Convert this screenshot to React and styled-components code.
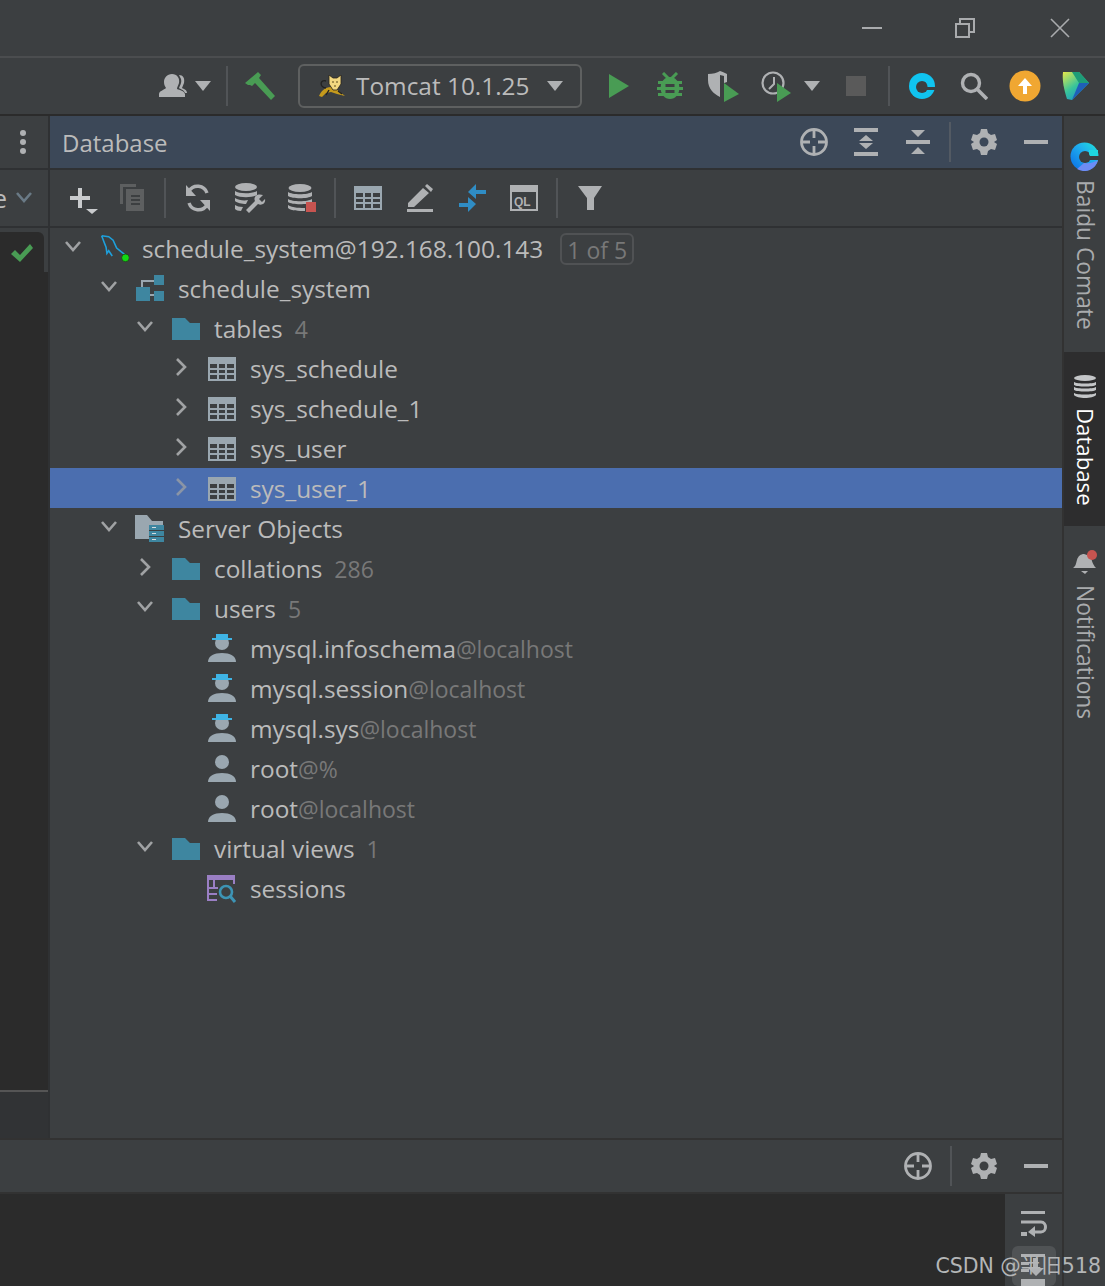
import React from 'react';
import styled, { createGlobalStyle } from 'styled-components';

const GREY = '#afb1b3';
const TABLE = '#9aa7b0';
const FOLDER = '#3e86a0';
const GREEN = '#499c54';

const GlobalStyle = createGlobalStyle`
  html, body {
    margin: 0;
    padding: 0;
    background: #3c3f41;
  }
  * {
    box-sizing: border-box;
  }
`;

const Page = styled.div`
  position: relative;
  display: flex;
  flex-direction: column;
  width: 1105px;
  height: 1286px;
  overflow: hidden;
  background: #3c3f41;
  color: #bbbbbb;
  font-family: 'Open Sans', 'Noto Sans', sans-serif;
`;

const TitleBar = styled.div`
  display: flex;
  flex: none;
  justify-content: flex-end;
  align-items: center;
  height: 58px;
  border-bottom: 2px solid #4b4d4f;
`;

const WinButton = styled.div`
  display: flex;
  justify-content: center;
  align-items: center;
  width: ${(p) => p.$w}px;
  height: 56px;
`;

const MainBar = styled.div`
  display: flex;
  flex: none;
  align-items: center;
  height: 58px;
  padding-left: 158px;
  border-bottom: 2px solid #2b2b2b;
`;

const IconSlot = styled.div`
  display: flex;
  flex: none;
  justify-content: center;
  align-items: center;
  width: ${(p) => p.$w || 52}px;
  margin-left: ${(p) => p.$ml || 0}px;
`;

const VSep = styled.div`
  flex: none;
  width: 2px;
  height: ${(p) => p.$h || 40}px;
  margin: 0 ${(p) => p.$mr || 0}px 0 ${(p) => p.$ml || 0}px;
  background: ${(p) => p.$color || '#515457'};
`;

const RunSelect = styled.div`
  display: flex;
  flex: none;
  align-items: center;
  width: 284px;
  height: 44px;
  margin-left: 22px;
  padding-left: 18px;
  border: 2px solid #5e6060;
  border-radius: 6px;
  font-size: 24.4px;
`;

const RunLabel = styled.span`
  margin-left: 10px;
  line-height: 40px;
  white-space: nowrap;
`;

const Body = styled.div`
  display: flex;
  flex: 1;
  min-height: 0;
`;

const Workspace = styled.div`
  display: flex;
  flex: 1;
  flex-direction: column;
  min-width: 0;
`;

const TopArea = styled.div`
  display: flex;
  flex: none;
  height: 1024px;
  border-bottom: 2px solid #323232;
`;

const LeftColumn = styled.div`
  display: flex;
  flex: none;
  flex-direction: column;
  width: 50px;
  border-right: 2px solid #2f3133;
`;

const DotsCell = styled.div`
  display: flex;
  flex: none;
  justify-content: flex-end;
  align-items: center;
  height: 54px;
  padding-right: 22px;
  border-bottom: 2px solid #2f3133;
`;

const ComboCell = styled.div`
  display: flex;
  flex: none;
  align-items: center;
  gap: 7px;
  height: 58px;
  margin-left: -7px;
  border-bottom: 2px solid #2f3133;
  font-size: 25px;
  color: #bbbbbb;
`;

const GutterGap = styled.div`
  flex: none;
  height: 4px;
`;

const CheckBox = styled.div`
  display: flex;
  flex: none;
  justify-content: center;
  align-items: center;
  width: 44px;
  height: 40px;
  padding-top: 2px;
  background: #2b2b2b;
  border-radius: 0 6px 0 0;
`;

const Gutter = styled.div`
  flex: none;
  height: 820px;
  background: #2b2b2b;
  border-bottom: 2px solid #555555;
`;

const GutterRest = styled.div`
  flex: 1;
  background: #313335;
`;

const DbPanel = styled.div`
  display: flex;
  flex: 1;
  flex-direction: column;
  min-width: 0;
`;

const PanelHeader = styled.div`
  display: flex;
  flex: none;
  align-items: center;
  height: 54px;
  padding-left: 12px;
  background: #3c4858;
  border-bottom: 2px solid #2f3133;
  background-clip: padding-box;
`;

const PanelTitle = styled.span`
  flex: 1;
  margin-top: 2px;
  font-size: 24px;
  line-height: 52px;
`;

const DbToolbar = styled.div`
  display: flex;
  flex: none;
  align-items: center;
  height: 58px;
  padding-left: 4px;
  border-bottom: 2px solid #2f3133;
`;

const Tree = styled.div`
  display: flex;
  flex: 1;
  flex-direction: column;
`;

const Row = styled.div`
  display: flex;
  flex: none;
  align-items: center;
  height: 40px;
  padding-top: 2px;
  padding-left: ${(p) => 12 + p.$level * 36}px;
  background: ${(p) => (p.$selected ? '#4b6eaf' : 'transparent')};
  font-size: 24.4px;
  white-space: nowrap;
`;

const Arrow = styled.div`
  display: flex;
  flex: none;
  justify-content: center;
  align-items: center;
  width: 22px;
  height: 38px;
  margin-top: -4px;
  opacity: ${(p) => (p.$selected ? 0.75 : 1)};
`;

const NodeIcon = styled.div`
  display: flex;
  flex: none;
  justify-content: center;
  align-items: center;
  width: 30px;
  height: 36px;
  margin: 0 13px 0 15px;
`;

const Label = styled.span`
  line-height: 38px;
  color: #bbbbbb;
`;

const Count = styled.span`
  margin-left: 12px;
  font-size: 23px;
  line-height: 38px;
  color: #787878;
`;

const Host = styled.span`
  font-size: 23px;
  line-height: 38px;
  color: #787878;
`;

const MatchBadge = styled.span`
  margin-left: 17px;
  padding: 0 5px;
  height: 32px;
  font-size: 23px;
  line-height: 30px;
  border: 2px solid #505254;
  border-radius: 6px;
  color: #787878;
`;

const BottomHeader = styled.div`
  display: flex;
  flex: none;
  justify-content: flex-end;
  align-items: center;
  height: 54px;
  border-bottom: 2px solid #323232;
`;

const Console = styled.div`
  display: flex;
  flex: 1;
  justify-content: flex-end;
  background: #2b2b2b;
`;

const ConsoleBar = styled.div`
  display: flex;
  flex-direction: column;
  align-items: center;
  width: 57px;
  padding-top: 17px;
  background: #3c3f41;
`;

const ScrollEnd = styled.div`
  display: flex;
  justify-content: center;
  width: 44px;
  height: 40px;
  margin-top: 9px;
  padding-top: 8px;
  background: #505355;
  border-radius: 6px;
`;

const RightStrip = styled.div`
  display: flex;
  flex: none;
  flex-direction: column;
  width: 43px;
  border-left: 2px solid #323232;
`;

const StripTab = styled.div`
  display: flex;
  flex: none;
  flex-direction: column;
  align-items: center;
  gap: ${(p) => p.$gap}px;
  height: ${(p) => p.$h}px;
  padding-top: ${(p) => p.$pt}px;
  background: ${(p) => (p.$active ? '#2d2d2e' : 'transparent')};
`;

const StripLabel = styled.span`
  writing-mode: vertical-rl;
  font-size: ${(p) => (p.$active ? 22.2 : 22.8)}px;
  line-height: 30px;
  white-space: nowrap;
  color: ${(p) => (p.$active ? '#ffffff' : '#a9abad')};
`;

const Watermark = styled.div`
  position: absolute;
  right: 4px;
  bottom: 6px;
  font-family: 'DejaVu Sans', 'Noto Sans CJK SC', sans-serif;
  font-size: 20.5px;
  line-height: 28px;
  color: #b4b6b7;
  white-space: nowrap;
`;

const Svg = ({ w, h, children, style }) => (
  <svg width={w} height={h} viewBox={`0 0 ${w} ${h}`} style={style} fill="none">
    {children}
  </svg>
);

const Caret = ({ color = GREY }) => (
  <Svg w={20} h={12}>
    <path d="M2 1h16l-8 10z" fill={color} />
  </Svg>
);

const Down = ({ color = '#a0a2a4' }) => (
  <Svg w={20} h={14}>
    <path d="M3 2l7 8 7-8" stroke={color} strokeWidth="2.6" />
  </Svg>
);

const Right = () => (
  <Svg w={14} h={20}>
    <path d="M3 2l8 8-8 8" stroke="#a0a2a4" strokeWidth="2.6" />
  </Svg>
);

const Folder = () => (
  <Svg w={28} h={22}>
    <path d="M0 0h13l5 5h10v17H0z" fill={FOLDER} />
  </Svg>
);

const TableIcon = () => (
  <Svg w={28} h={24}>
    <path d="M0 0h28v24H0z" fill={TABLE} />
    <path
      d="M2 7h7v4H2zM11 7h6v4h-6zM19 7h7v4h-7zM2 13h7v3H2zM11 13h6v3h-6zM19 13h7v3h-7zM2 18h7v4H2zM11 18h6v4h-6zM19 18h7v4h-7z"
      fill="#3c3f41"
    />
  </Svg>
);

const Person = ({ hat }) => (
  <Svg w={28} h={30}>
    <circle cx="14" cy={hat ? 9 : 8} r="7" fill={TABLE} />
    <path d="M0 28c0-6 6-9 14-9s14 3 14 9z" fill={TABLE} />
    {hat && (
      <>
        <path d="M8 0h12v5H8z" fill="#3fb4e5" />
        <path d="M4 4h20v2H4z" fill="#3fb4e5" />
      </>
    )}
  </Svg>
);

const Dolphin = () => (
  <Svg w={34} h={34}>
    <path
      d="M3 2l8 1 5 4 4 9 5 4 4 3M3 2l3 8 2 5 1 7 2-3 4 6"
      stroke="#1ea0dc"
      strokeWidth="1.8"
    />
    <circle cx="30" cy="27" r="4.4" fill="#12d912" stroke="#22421f" strokeWidth="1" />
  </Svg>
);

const Schema = () => (
  <Svg w={28} h={28}>
    <path d="M18 0h10v10H18zM0 12h14v14H0zM18 16h10v10H18z" fill={FOLDER} />
    <path d="M6 12V6h12M14 20h4" stroke="#9aa7b0" strokeWidth="2" />
  </Svg>
);

const ServerObjects = () => (
  <Svg w={30} h={28}>
    <path d="M0 0h12l5 6h11v4H14v14H0z" fill={TABLE} />
    <path d="M14 10h15v5H14zM14 16h15v5H14zM14 22h15v5H14z" fill={FOLDER} />
    <path d="M17 12h4v1h-4zM17 18h4v1h-4zM17 24h4v1h-4z" fill="#d5dde0" />
  </Svg>
);

const VirtualView = () => (
  <Svg w={30} h={28}>
    <path d="M0 0h28v5H0z" fill="#9a7fc4" />
    <path
      d="M0 5h2v21H0zM2 12h9v2H2zM2 18h8v2H2zM2 24h8v2H2zM6 5h2v9H6zM26 5h2v4h-2z"
      fill="#9a7fc4"
    />
    <circle cx="19" cy="17" r="6" stroke="#3d94b5" strokeWidth="2.6" />
    <path d="M23 21l5 6" stroke="#3d94b5" strokeWidth="3" />
  </Svg>
);

const Target = ({ color = GREY }) => (
  <Svg w={28} h={28}>
    <circle cx="14" cy="14" r="12.5" stroke={color} strokeWidth="2.8" />
    <path d="M14 2v8M14 18v8M2 14h8M18 14h8" stroke={color} strokeWidth="2.8" />
  </Svg>
);

const GEAR_PATH =
  'M10 1h6l1 4 3 2 4-1 2 6-3 2 3 2-2 6-4-1-3 2-1 4h-6l-1-4-3-2-4 1-2-6 3-2-3-2 2-6 4 1 3-2z';

const Gear = ({ hole = '#3c3f41' }) => (
  <Svg w={26} h={28}>
    <path d={GEAR_PATH} fill={GREY} />
    <circle cx="13" cy="14" r="4.5" fill={hole} />
  </Svg>
);

const Dash = () => (
  <Svg w={24} h={4}>
    <path d="M0 0h24v4H0z" fill={GREY} />
  </Svg>
);

const Users = () => (
  <Svg w={30} h={26}>
    <path
      d="M14 1c5 0 8 4 7 9-1 3-2 4-2 6 3 1 7 2 8 5v3H1v-3c0-3 5-4 7-6-1-2-2-3-2-6 0-4 3-8 8-8z"
      fill={GREY}
    />
    <path d="M21 2c4 0 6 3 5 8l-2 5c2 1 5 2 5 5h-2c-1-3-5-4-6-5 1-3 3-5 2-9z" fill={GREY} />
  </Svg>
);

const Hammer = () => (
  <Svg w={32} h={30}>
    <path d="M1 12L14 1l3 3-2 3 16 18-4 4L11 12l-3 3-2-1-2 0z" fill={GREEN} />
  </Svg>
);

const Tomcat = () => (
  <Svg w={28} h={22}>
    <path d="M1 21c2-5 6-9 12-9l4 2c3 1 6 4 10 7l-8-2-6-2-5 1-4 4z" fill="#c59a1c" />
    <path d="M11 0l4 3h4l4-3v9l-4 6h-4l-4-6z" fill="#f3d880" stroke="#28241a" strokeWidth="0.8" />
    <path d="M14 7h2M18 7h2M16 11h2" stroke="#5a4a1a" strokeWidth="1.2" />
    <path d="M8 13C1 12 2 4 8 6" stroke="#222" strokeWidth="1.4" />
    <path d="M11 15l-3 5M20 16l4 3" stroke="#222" strokeWidth="1.4" />
  </Svg>
);

const Play = () => (
  <Svg w={20} h={24}>
    <path d="M0 0l20 12L0 24z" fill={GREEN} />
  </Svg>
);

const Bug = () => (
  <Svg w={26} h={28}>
    <path d="M6 1l6 6M20 1l-6 6" stroke={GREEN} strokeWidth="3" />
    <ellipse cx="13" cy="16" rx="9.5" ry="11" fill={GREEN} />
    <path d="M1 9h24v3H1zM0 15h26v3H0zM1 21h24v3H1z" fill={GREEN} />
    <path d="M8.5 12h9v3h-9zM8.5 18h9v3h-9z" fill="#3c3f41" />
  </Svg>
);

const Coverage = () => (
  <Svg w={32} h={32}>
    <path d="M1 4c5 0 9-1 12-3 3 1 5 2 7 3v8l-3 1v-7l-4-1v22c-6-3-12-8-12-17z" fill={GREY} />
    <path d="M17 13l15 11-15 8z" fill={GREEN} />
  </Svg>
);

const Profiler = () => (
  <Svg w={32} h={32}>
    <circle cx="12" cy="13" r="10.5" stroke={GREY} strokeWidth="2.2" />
    <path d="M13 7v7l-5 5" stroke={GREY} strokeWidth="2" />
    <path d="M16 13l14 10-14 9z" fill={GREEN} />
  </Svg>
);

const ComateTop = () => (
  <Svg w={28} h={28}>
    <circle cx="14" cy="14" r="13" fill="#10c4f0" />
    <circle cx="14" cy="15" r="6" fill="#3c3f41" />
    <path d="M14 15h14v3H14z" fill="#3c3f41" />
    <path d="M18 9h8v6h-8z" fill="#10c4f0" />
    <circle cx="15" cy="14.5" r="4.5" fill="#3c3f41" />
    <path d="M15 15h5v2h-5z" fill="#3c3f41" />
  </Svg>
);

const ComateSide = () => (
  <Svg w={29} h={29}>
    <defs>
      <linearGradient id="comate" x1="0" y1="1" x2="1" y2="0">
        <stop offset="0" stopColor="#0a6ae6" />
        <stop offset="0.6" stopColor="#1fb0ee" />
        <stop offset="1" stopColor="#1fe6d8" />
      </linearGradient>
    </defs>
    <circle cx="14.5" cy="14.5" r="14" fill="url(#comate)" />
    <path d="M14 21a14 7 0 0 0 14-3 14 14 0 0 1-21 9z" fill="#6d8cf5" />
    <circle cx="15" cy="15" r="6" fill="#3c3f41" />
    <path d="M15 14h14v4H15z" fill="#3c3f41" />
    <path d="M19 8h9v6h-9z" fill="#1fd8e0" />
    <circle cx="15.5" cy="15" r="4.5" fill="#3c3f41" />
  </Svg>
);

const Search = () => (
  <Svg w={28} h={28}>
    <circle cx="11" cy="11" r="8.5" stroke={GREY} strokeWidth="3.4" />
    <path d="M17 17l10 10" stroke={GREY} strokeWidth="3.6" />
  </Svg>
);

const UpdateBadge = () => (
  <Svg w={32} h={32}>
    <circle cx="16" cy="16" r="15.5" fill="#f0a732" />
    <path d="M16 8l-7 8h5v8h4v-8h5z" fill="#ffffff" />
  </Svg>
);

const Prism = () => (
  <Svg w={28} h={32}>
    <defs>
      <linearGradient id="prism" x1="0" y1="0" x2="0.7" y2="1">
        <stop offset="0" stopColor="#e8e84a" />
        <stop offset="0.55" stopColor="#38c49a" />
        <stop offset="1" stopColor="#1a8fd0" />
      </linearGradient>
    </defs>
    <path d="M1 2l16 0 10 11L10 30l-5-1C2 20 0 10 1 2z" fill="url(#prism)" />
    <path d="M10 2h7l10 11H17z" fill="#1d9c78" />
    <path d="M27 13L10 30l7-17z" fill="#1f5fb8" />
  </Svg>
);

const Dots = () => (
  <Svg w={6} h={24}>
    <circle cx="3" cy="3" r="3" fill={GREY} />
    <circle cx="3" cy="12" r="3" fill={GREY} />
    <circle cx="3" cy="21" r="3" fill={GREY} />
  </Svg>
);

const Expand = () => (
  <Svg w={24} h={28}>
    <path d="M0 0h24v4H0zM0 24h24v4H0zM12 7l7 6H5zM5 15h14l-7 6z" fill={GREY} />
  </Svg>
);

const Collapse = () => (
  <Svg w={24} h={26}>
    <path d="M0 11h24v4H0zM5 1h14l-7 7zM12 18l7 7H5z" fill={GREY} />
  </Svg>
);

const Plus = () => (
  <Svg w={36} h={32}>
    <path d="M16 6h4v8h8v4h-8v8h-4v-8H8v-4h8z" fill="#c9cbcd" />
    <path d="M24 27h12l-6 5z" fill="#c9cbcd" />
  </Svg>
);

const Duplicate = () => (
  <Svg w={24} h={28}>
    <path d="M0 0h16v3H3v17H0z" fill="#5d5f60" />
    <path d="M6 5h18v22H6z" fill="#5d5f60" />
    <path d="M11 11h9v2h-9zM11 15h9v2h-9zM11 19h9v2h-9z" fill="#3c3f41" />
  </Svg>
);

const Refresh = () => (
  <Svg w={26} h={28}>
    <path d="M22 9a10 10 0 0 0-18-2" stroke={GREY} strokeWidth="3.4" />
    <path d="M4 19a10 10 0 0 0 18 2" stroke={GREY} strokeWidth="3.4" />
    <path d="M1 1v11h10zM25 27V16H15z" fill={GREY} />
  </Svg>
);

const DbWrench = () => (
  <Svg w={32} h={30}>
    <ellipse cx="12" cy="4" rx="11" ry="4" fill={GREY} />
    <path d="M1 8c4 3 17 3 22 0v4c-5 3-17 3-22 0zM1 15c3 2 9 3 13 2l-2 4c-4 0-9-1-11-3zM1 22c2 1 4 2 8 2l-2 4c-3 0-5-1-6-2z" fill={GREY} />
    <path d="M29 12l-4 4 3 3 3-3c1 4-3 7-7 5l-9 9-3-3 9-9c-2-4 2-8 8-6z" fill={GREY} />
  </Svg>
);

const DbStop = () => (
  <Svg w={28} h={28}>
    <ellipse cx="12" cy="4" rx="11.5" ry="4" fill={GREY} />
    <path d="M0 8c4 3 20 3 24 0v4c-4 3-20 3-24 0zM0 15c4 3 20 3 24 0v3c-4 3-20 3-24 0zM0 21c4 3 14 3 17 3v3c-6 0-14 0-17-3z" fill={GREY} />
    <path d="M18 18h10v10H18z" fill="#c75450" />
  </Svg>
);

const Edit = () => (
  <Svg w={28} h={28}>
    <path d="M2 19L17 4l6 5L8 23H2zM19 2l2-2 6 5-2 3z" fill={GREY} />
    <path d="M1 25h26v3H1z" fill={GREY} />
  </Svg>
);

const Compare = () => (
  <Svg w={28} h={28}>
    <path d="M18 0v6h10v4H18v5l-8-7zM10 13v6h-9v4h9v5l8-8z" fill="#2f8dc5" />
  </Svg>
);

const QlConsole = () => (
  <Svg w={28} h={26}>
    <path d="M0 0h28v26H0z" fill={GREY} />
    <path d="M2 7h24v17H2z" fill="#3c3f41" />
    <text x="4" y="21" fontSize="12" fontFamily="'Liberation Sans', sans-serif" fontWeight="700" fill={GREY}>
      QL
    </text>
  </Svg>
);

const Funnel = () => (
  <Svg w={24} h={24}>
    <path d="M0 0h24l-8 12v12H9V12z" fill={GREY} />
  </Svg>
);

const Check = () => (
  <Svg w={24} h={20}>
    <path d="M1 11l4-4 5 5L20 1l3 4-13 14z" fill={GREEN} />
  </Svg>
);

const DbStack = () => (
  <Svg w={24} h={24}>
    <ellipse cx="12" cy="3" rx="11" ry="3" fill="#c4c6c8" />
    <path d="M1 7c3 2 19 2 22 0v3c-3 2-19 2-22 0zM1 12c3 2 19 2 22 0v3c-3 2-19 2-22 0zM1 18c3 2 19 2 22 0v2c-3 4-19 4-22 0z" fill="#c4c6c8" />
  </Svg>
);

const Bell = () => (
  <Svg w={26} h={26}>
    <path d="M1 18c3-2 3-5 4-8 1-4 4-6 7-6l6 2c2 3 2 8 6 12z" fill={GREY} />
    <path d="M9 21h7l-3 3z" fill={GREY} />
    <circle cx="20" cy="5" r="5" fill="#c75450" />
  </Svg>
);

const SoftWrap = () => (
  <Svg w={26} h={26}>
    <path d="M0 0h24v3H0zM0 21h6v4H0z" fill={GREY} />
    <path d="M0 11h20c6 0 6 10 0 10h-8" stroke={GREY} strokeWidth="3" />
    <path d="M14 15v11l-7-5z" fill={GREY} />
  </Svg>
);

const ScrollDown = () => (
  <Svg w={26} h={32}>
    <path d="M0 0h24v3H0zM0 8h8v3H0zM0 15h8v3H0zM0 25h24v7H0z" fill={GREY} />
    <path d="M12 4h5v10h6l-8 8-8-8h5z" fill={GREY} />
  </Svg>
);

const treeRows = [
  { level: 0, open: true, icon: <Dolphin />, label: 'schedule_system@192.168.100.143', badge: '1 of 5' },
  { level: 1, open: true, icon: <Schema />, label: 'schedule_system' },
  { level: 2, open: true, icon: <Folder />, label: 'tables', count: '4' },
  { level: 3, open: false, icon: <TableIcon />, label: 'sys_schedule' },
  { level: 3, open: false, icon: <TableIcon />, label: 'sys_schedule_1' },
  { level: 3, open: false, icon: <TableIcon />, label: 'sys_user' },
  { level: 3, open: false, icon: <TableIcon />, label: 'sys_user_1', selected: true },
  { level: 1, open: true, icon: <ServerObjects />, label: 'Server Objects' },
  { level: 2, open: false, icon: <Folder />, label: 'collations', count: '286' },
  { level: 2, open: true, icon: <Folder />, label: 'users', count: '5' },
  { level: 3, icon: <Person hat />, label: 'mysql.infoschema', host: '@localhost' },
  { level: 3, icon: <Person hat />, label: 'mysql.session', host: '@localhost' },
  { level: 3, icon: <Person hat />, label: 'mysql.sys', host: '@localhost' },
  { level: 3, icon: <Person />, label: 'root', host: '@%' },
  { level: 3, icon: <Person />, label: 'root', host: '@localhost' },
  { level: 2, open: true, icon: <Folder />, label: 'virtual views', count: '1' },
  { level: 3, icon: <VirtualView />, label: 'sessions' },
];

const TreeRow = ({ row }) => (
  <Row $level={row.level} $selected={row.selected}>
    <Arrow $selected={row.selected}>
      {row.open === true && <Down />}
      {row.open === false && <Right />}
    </Arrow>
    <NodeIcon>{row.icon}</NodeIcon>
    <Label>{row.label}</Label>
    {row.host && <Host>{row.host}</Host>}
    {row.count && <Count>{row.count}</Count>}
    {row.badge && <MatchBadge>{row.badge}</MatchBadge>}
  </Row>
);

export default function App() {
  return (
    <Page>
      <GlobalStyle />
      <TitleBar>
        <WinButton $w={86}>
          <Svg w={20} h={2}>
            <path d="M0 0h20v2H0z" fill="#a9abad" />
          </Svg>
        </WinButton>
        <WinButton $w={100}>
          <Svg w={20} h={20}>
            <path d="M1 6h13v13H1zM5 6V1h14v13h-5" stroke="#a9abad" strokeWidth="2" />
          </Svg>
        </WinButton>
        <WinButton $w={90}>
          <Svg w={20} h={20}>
            <path d="M1 1l18 18M19 1L1 19" stroke="#a9abad" strokeWidth="1.6" />
          </Svg>
        </WinButton>
      </TitleBar>

      <MainBar>
        <IconSlot $w={30}><Users /></IconSlot>
        <IconSlot $w={20} $ml={5}><Caret /></IconSlot>
        <VSep $ml={13} />
        <IconSlot $w={32} $ml={16}><Hammer /></IconSlot>
        <RunSelect>
          <Tomcat />
          <RunLabel>Tomcat 10.1.25</RunLabel>
          <IconSlot $w={20} $ml={15}><Caret /></IconSlot>
        </RunSelect>
        <IconSlot $w={20} $ml={27}><Play /></IconSlot>
        <IconSlot $w={26} $ml={28}><Bug /></IconSlot>
        <IconSlot $w={32} $ml={24}><Coverage /></IconSlot>
        <IconSlot $w={32} $ml={22}><Profiler /></IconSlot>
        <IconSlot $w={20} $ml={9}><Caret /></IconSlot>
        <IconSlot $w={20} $ml={24}>
          <Svg w={20} h={20}>
            <path d="M0 0h20v20H0z" fill="#5a5a5a" />
          </Svg>
        </IconSlot>
        <VSep $ml={22} />
        <IconSlot $w={28} $ml={18}><ComateTop /></IconSlot>
        <IconSlot $w={28} $ml={24}><Search /></IconSlot>
        <IconSlot $w={32} $ml={21}><UpdateBadge /></IconSlot>
        <IconSlot $w={28} $ml={21}><Prism /></IconSlot>
      </MainBar>

      <Body>
        <Workspace>
          <TopArea>
            <LeftColumn>
              <DotsCell><Dots /></DotsCell>
              <ComboCell>
                <span>e</span>
                <Down color="#6a7a86" />
              </ComboCell>
              <GutterGap />
              <CheckBox><Check /></CheckBox>
              <Gutter />
              <GutterRest />
            </LeftColumn>
            <DbPanel>
              <PanelHeader>
                <PanelTitle>Database</PanelTitle>
                <IconSlot><Target /></IconSlot>
                <IconSlot><Expand /></IconSlot>
                <IconSlot><Collapse /></IconSlot>
                <VSep $color="#535a63" $ml={5} $mr={7} />
                <IconSlot><Gear hole="#3c4858" /></IconSlot>
                <IconSlot><Dash /></IconSlot>
              </PanelHeader>
              <DbToolbar>
                <IconSlot><Plus /></IconSlot>
                <IconSlot><Duplicate /></IconSlot>
                <VSep $ml={6} $mr={6} />
                <IconSlot><Refresh /></IconSlot>
                <IconSlot><DbWrench /></IconSlot>
                <IconSlot><DbStop /></IconSlot>
                <VSep $ml={6} $mr={6} />
                <IconSlot><TableIcon /></IconSlot>
                <IconSlot><Edit /></IconSlot>
                <IconSlot><Compare /></IconSlot>
                <IconSlot><QlConsole /></IconSlot>
                <VSep $ml={6} $mr={6} />
                <IconSlot><Funnel /></IconSlot>
              </DbToolbar>
              <Tree>
                {treeRows.map((row, i) => (
                  <TreeRow key={i} row={row} />
                ))}
              </Tree>
            </DbPanel>
          </TopArea>
          <BottomHeader>
            <IconSlot><Target /></IconSlot>
            <VSep $ml={6} $mr={6} />
            <IconSlot><Gear /></IconSlot>
            <IconSlot><Dash /></IconSlot>
          </BottomHeader>
          <Console>
            <ConsoleBar>
              <SoftWrap />
              <ScrollEnd><ScrollDown /></ScrollEnd>
            </ConsoleBar>
          </Console>
        </Workspace>
        <RightStrip>
          <StripTab $h={236} $pt={26} $gap={9}>
            <ComateSide />
            <StripLabel>Baidu Comate</StripLabel>
          </StripTab>
          <StripTab $h={174} $pt={23} $gap={9} $active>
            <DbStack />
            <StripLabel $active>Database</StripLabel>
          </StripTab>
          <StripTab $h={200} $pt={24} $gap={9}>
            <Bell />
            <StripLabel>Notifications</StripLabel>
          </StripTab>
        </RightStrip>
      </Body>
      <Watermark>CSDN @半旧518</Watermark>
    </Page>
  );
}
